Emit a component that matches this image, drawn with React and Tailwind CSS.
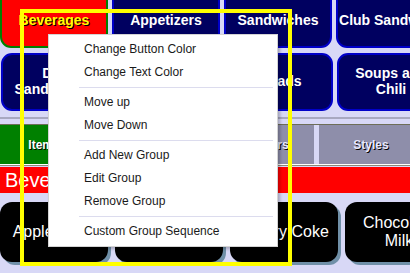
import React from 'react';

const topRow = ['Beverages', 'Appetizers', 'Sandwiches', 'Club Sandwiches'];
const secondRow = [['Deli', 'Sandwiches'], ['Burgers'], ['Salads'], ['Soups and', 'Chili']];
const tabs = ['Items', 'Options', 'Modifiers', 'Styles'];
const items = [['Apple Juice'], ['Coffee'], ['Cherry Coke'], ['Chocolate', 'Milk']];

const menu = [
  'Change Button Color',
  'Change Text Color',
  '-',
  'Move up',
  'Move Down',
  '-',
  'Add New Group',
  'Edit Group',
  'Remove Group',
  '-',
  'Custom Group Sequence',
];

function GroupButton({ lines, active, last, className = '' }) {
  return (
    <div
      className={
        'shrink-0 flex flex-col items-center justify-center rounded-[11px] border-2 text-[14px] font-bold leading-[16px] ' +
        (last ? 'w-[122px] ' : 'w-[108px] ') +
        (active
          ? 'bg-[#ff0000] border-[#008000] text-[#ffff00] [text-shadow:1px_1px_0_#000]'
          : 'bg-[#000060] border-[#0000c8] text-white') +
        ' ' +
        className
      }
    >
      {lines.map((l) => (
        <span key={l} className="whitespace-nowrap">{l}</span>
      ))}
    </div>
  );
}

export default function App() {
  return (
    <div
      className="relative w-[410px] h-[273px] overflow-hidden bg-[#d8d8f6]"
      style={{ fontFamily: '"Liberation Sans", Arial, sans-serif' }}
    >
      <div className="flex gap-[4px] -mt-[12px] h-[60px]">
        {topRow.map((t, i) => (
          <GroupButton key={t} lines={[t]} active={i === 0} last={i === 3} className="pt-[4px]" />
        ))}
      </div>
      <div className="flex gap-[4px] mt-[5px] h-[58px] pl-[1px]">
        {secondRow.map((l) => (
          <GroupButton key={l.join()} lines={l} className="pb-[2px]" />
        ))}
      </div>

      <div className="mt-[6px] h-[2px] bg-[#a8a8c0]" />
      <div className="mt-[5px] border-t border-[#6e6e58] flex gap-[5px] -ml-[8px] h-[40px]">
        {tabs.map((t, i) => (
          <div
            key={t}
            className={
              'shrink-0 w-[104px] flex items-center justify-center text-[12px] font-bold [text-shadow:1px_1px_0_#000] ' +
              (i === 0 ? 'bg-[#008000] text-white' : 'bg-[#8e8eaa] text-[#e8e8ff]')
            }
          >
            {t}
          </div>
        ))}
      </div>
      <div className="h-[2px] bg-white border-b border-[#8a8a7a]" />
      <div className="mt-[1px] h-[26px] bg-[#ff0000] text-white text-[20px] leading-[26px] pl-[5px]">
        Beverages
      </div>

      <div className="flex gap-[7px] mt-[9px] h-[60px]">
        {items.map((l) => (
          <div
            key={l.join()}
            className="shrink-0 w-[108px] flex flex-col items-center justify-center rounded-[12px] bg-black text-white text-[16px] leading-[18px] shadow-[3px_3px_0_#7090a8]"
          >
            {l.map((x) => (
              <span key={x} className="whitespace-nowrap">{x}</span>
            ))}
          </div>
        ))}
      </div>

      <div className="absolute left-[20px] top-[9px] w-[272px] h-[257px] border-4 border-[#ffff00]" />

      <div
        className="absolute left-[48px] top-[34px] w-[230px] py-[3px] bg-white border border-[#d4d4d4] shadow-[2px_2px_3px_rgba(0,0,0,0.25)] text-[12px] text-[#1a1a1a]"
        style={{ fontFamily: '"Liberation Sans", Arial, sans-serif' }}
      >
        {menu.map((m, i) =>
          m === '-' ? (
            <div key={i} className="h-[7px] flex items-center pl-[30px] pr-[4px]">
              <div className="h-[1px] w-full bg-[#dcdcee]" />
            </div>
          ) : (
            <div key={i} className="h-[23px] leading-[23px] pl-[35px]">
              {m}
            </div>
          )
        )}
      </div>
    </div>
  );
}
